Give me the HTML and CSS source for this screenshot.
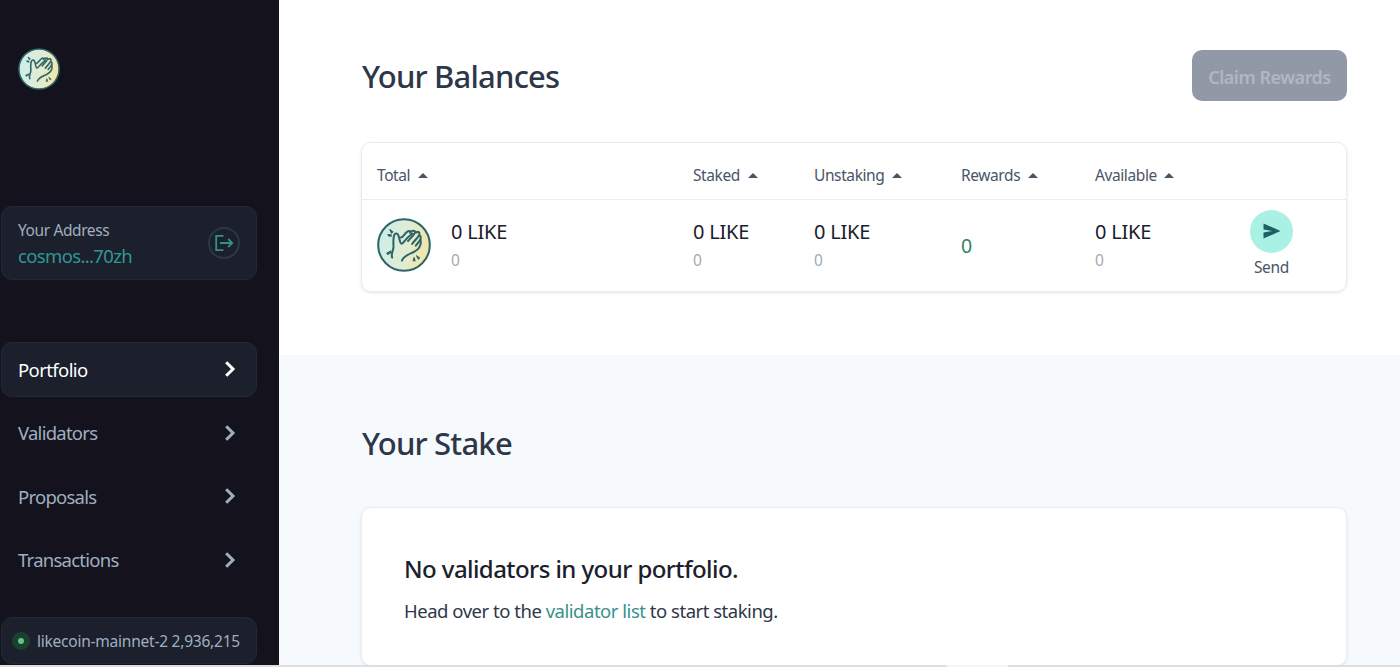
FILE: index.html
```
<!DOCTYPE html>
<html lang="en">
<head>
    <meta charset="UTF-8">
    <meta name="viewport" content="width=device-width, initial-scale=1.0">
    <link rel="stylesheet" href="styles.css">
    <title>Portfolio</title>
</head>
<body>

<svg class="sprite" width="0" height="0">
    <defs>
        <linearGradient id="coin" x1="0" y1="0.4" x2="1" y2="0.6">
            <stop offset="0" stop-color="#cdeee8"/>
            <stop offset="0.55" stop-color="#e2ecd2"/>
            <stop offset="1" stop-color="#f5e3a3"/>
        </linearGradient>
    </defs>
    <symbol id="clap" viewBox="0 0 160 160">
        <circle cx="80" cy="80" r="76.5" fill="url(#coin)" stroke="#2c646a" stroke-width="6"/>
        <g fill="none" stroke="#2c646a" stroke-width="6" stroke-linecap="round" stroke-linejoin="round">
            <path d="M45 117C40 106 49 98 49 84C48 70 48 59 51 51C54 43 62 45 64 53L69 72C71 78 75 77 80 70C87 61 96 53 105 46"/>
            <path d="M71 58C78 56 81 47 89 41C94 37 101 38 98 44"/>
            <path d="M100 41C107 36 115 37 112 44C109 51 101 58 92 68"/>
            <path d="M115 43C122 39 128 42 125 50C121 59 112 66 104 77"/>
            <path d="M126 52C132 54 130 63 125 69L115 82"/>
            <path d="M129 65C132 81 124 92 112 99C98 107 80 110 74 126"/>
        </g>
        <g fill="#2c646a" stroke="#2c646a" stroke-width="3" stroke-linejoin="round">
            <path d="M38 34L47 41L43 45Z"/>
            <path d="M32 49L42 50L42 54L35 53Z"/>
            <path d="M117 112L126 118L123 122Z"/>
            <path d="M110 117L113 127L107 127Z"/>
            <path d="M29 104L41 98L42 102L32 108Z"/>
        </g>
    </symbol>
    <symbol id="chevron" viewBox="0 0 12 18">
        <path d="M2.2 2.2L9 9L2.2 15.8" fill="none" stroke="currentColor" stroke-width="3"/>
    </symbol>
</svg>

<div class="app">
    <aside class="sidebar">
        <svg class="logo"><use href="#clap"/></svg>

        <div class="address-card">
            <div>
                <p class="address-label">Your Address</p>
                <p class="address">cosmos...70zh</p>
            </div>
            <button class="sign-out" aria-label="Sign out">
                <svg width="20" height="18" viewBox="0 0 20 18" fill="none" stroke="currentColor" stroke-width="1.8">
                    <path d="M9.5 1.9H2.2V16.1H9.5M6 9H18M14.2 5L18.2 9L14.2 13"/>
                </svg>
            </button>
        </div>

        <nav class="menu">
            <a class="menu-item active"><span>Portfolio</span><svg class="chevron"><use href="#chevron"/></svg></a>
            <a class="menu-item"><span>Validators</span><svg class="chevron"><use href="#chevron"/></svg></a>
            <a class="menu-item"><span>Proposals</span><svg class="chevron"><use href="#chevron"/></svg></a>
            <a class="menu-item"><span>Transactions</span><svg class="chevron"><use href="#chevron"/></svg></a>
        </nav>

        <div class="network">
            <span class="status-dot"></span>
            <span>likecoin-mainnet-2 2,936,215</span>
        </div>
    </aside>

    <main class="content">
        <section class="balances">
            <div class="section-header">
                <h1>Your Balances</h1>
                <button class="claim" disabled>Claim Rewards</button>
            </div>

            <div class="table">
                <div class="row head">
                    <span>Total <i class="sort"></i></span>
                    <span>Staked <i class="sort"></i></span>
                    <span>Unstaking <i class="sort"></i></span>
                    <span>Rewards <i class="sort"></i></span>
                    <span>Available <i class="sort"></i></span>
                </div>
                <div class="row data">
                    <div class="total">
                        <svg class="token"><use href="#clap"/></svg>
                        <div>
                            <p class="amount">0 LIKE</p>
                            <p class="fiat">0</p>
                        </div>
                    </div>
                    <div>
                        <p class="amount">0 LIKE</p>
                        <p class="fiat">0</p>
                    </div>
                    <div>
                        <p class="amount">0 LIKE</p>
                        <p class="fiat">0</p>
                    </div>
                    <p class="rewards">0</p>
                    <div>
                        <p class="amount">0 LIKE</p>
                        <p class="fiat">0</p>
                    </div>
                    <div class="send">
                        <span class="send-icon">
                            <svg width="18" height="16" viewBox="0 0 18 16">
                                <path d="M0.5 0.5L17.5 8L0.5 15.5V9.6L9 8L0.5 6.4Z" fill="#1f5f62"/>
                            </svg>
                        </span>
                        <span>Send</span>
                    </div>
                </div>
            </div>
        </section>

        <section class="stake">
            <h1>Your Stake</h1>
            <div class="empty-card">
                <h2>No validators in your portfolio.</h2>
                <p>Head over to the <a>validator list</a> to start staking.</p>
            </div>
        </section>
    </main>
</div>

<div class="bottom-bar"><span></span></div>

</body>
</html>
```
FILE: styles.css
```
* {
    box-sizing: border-box;
}

body {
    margin: 0;
    height: 667px;
    overflow: hidden;
    display: flex;
    flex-direction: column;
    background: #fff;
    color: #2d3748;
    font-family: "Noto Sans", "Open Sans", sans-serif;
}

h1, h2, p {
    margin: 0;
}

button {
    font-family: inherit;
    padding: 0;
}

.sprite {
    position: absolute;
}

.app {
    display: flex;
    height: 665px;
    overflow: hidden;
}

/* sidebar */
.sidebar {
    width: 279px;
    flex-shrink: 0;
    padding: 48px 22px 0 1px;
    background: #14131d;
    color: #a0aec0;
    display: flex;
    flex-direction: column;
}

.logo {
    width: 42px;
    height: 42px;
    margin-left: 17px;
    flex-shrink: 0;
}

.address-card {
    height: 74px;
    margin-top: 116px;
    padding: 0 16px;
    display: flex;
    align-items: center;
    justify-content: space-between;
    background: #1b202c;
    border: 1px solid #222836;
    border-radius: 11px;
    flex-shrink: 0;
}

.address-label {
    padding-top: 1px;
    font-size: 15.5px;
    line-height: 24px;
    letter-spacing: -0.4px;
}

.address {
    font-size: 18.5px;
    line-height: 28px;
    letter-spacing: -0.65px;
    color: #319795;
}

.sign-out {
    width: 32px;
    height: 32px;
    display: flex;
    align-items: center;
    justify-content: center;
    border: 2px solid #2d3748;
    border-radius: 50%;
    background: none;
    color: #319188;
}

.menu {
    margin-top: 62px;
    display: flex;
    flex-direction: column;
    gap: 8.5px;
}

.menu-item {
    height: 55px;
    padding: 0 20px 1px 16px;
    display: flex;
    align-items: center;
    justify-content: space-between;
    border: 1px solid transparent;
    border-radius: 11px;
    font-size: 18.5px;
    letter-spacing: -0.75px;
}

.menu-item.active {
    background: #1b202c;
    border-color: #222836;
    color: #fff;
    letter-spacing: -0.6px;
}

.chevron {
    width: 12px;
    height: 18px;
}

.network {
    height: 47px;
    margin-top: 29px;
    padding: 1px 10px 0;
    display: flex;
    align-items: center;
    gap: 7px;
    background: #1b202c;
    border: 1px solid #222836;
    border-radius: 11px;
    font-size: 15.5px;
    letter-spacing: -0.23px;
    white-space: nowrap;
}

.status-dot {
    width: 18px;
    height: 18px;
    border: 6px solid #1d3f2f;
    border-radius: 50%;
    background: #5cc787;
    flex-shrink: 0;
}

/* content */
.content {
    flex: 1;
    display: flex;
    flex-direction: column;
}

.balances {
    height: 355px;
    flex-shrink: 0;
    padding: 50px 53px 0 82px;
}

.section-header {
    display: flex;
    justify-content: space-between;
    align-items: center;
}

h1 {
    padding-left: 1px;
    font-size: 31px;
    line-height: 50px;
    font-weight: 500;
    letter-spacing: -0.8px;
}

.claim {
    width: 155px;
    height: 51px;
    padding-top: 2px;
    border: 0;
    border-radius: 10px;
    background: #9299a6;
    color: #b0b7c4;
    font-size: 18px;
    font-weight: 600;
    letter-spacing: -0.5px;
}

.table {
    height: 150px;
    margin-top: 41px;
    border: 1px solid #e9ecf0;
    border-radius: 10px;
    box-shadow: 0 1px 3px rgba(45, 55, 72, 0.12);
}

.row {
    display: grid;
    grid-template-columns: 316px 121px 147px 134px 155px 43px;
    padding-left: 15px;
}

.head {
    height: 57px;
    padding-top: 7px;
    align-items: center;
    border-bottom: 1px solid #e9ecf0;
    color: #4a5568;
    font-size: 15.5px;
    letter-spacing: -0.4px;
}

.sort {
    display: inline-block;
    margin-left: 4px;
    border: 5px solid transparent;
    border-top: 0;
    border-bottom-color: #4a5568;
    vertical-align: 3px;
}

.data {
    height: 90px;
    align-items: center;
}

.total {
    display: flex;
    align-items: center;
    gap: 20px;
}

.token {
    width: 54px;
    height: 54px;
}

.amount {
    color: #1a202c;
    font-size: 20px;
    line-height: 30px;
    letter-spacing: -0.2px;
}

.fiat {
    color: #a5a9b0;
    font-size: 15.5px;
    line-height: 26px;
}

.rewards {
    color: #2f7f69;
    font-size: 19.5px;
}

.send {
    display: flex;
    flex-direction: column;
    align-items: center;
    color: #4a5568;
    font-size: 15.5px;
    line-height: 28px;
    letter-spacing: -0.3px;
}

.send-icon {
    width: 43px;
    height: 43px;
    display: flex;
    align-items: center;
    justify-content: center;
    border-radius: 50%;
    background: #a8f1e4;
}

.stake {
    flex: 1;
    padding: 63px 53px 0 82px;
    background: #f6fafd;
}

.empty-card {
    height: 159px;
    margin-top: 39px;
    padding: 44px 42px;
    background: #fff;
    border: 1px solid #e9eef2;
    border-radius: 10px;
    box-shadow: 0 1px 3px rgba(45, 55, 72, 0.12);
}

h2 {
    color: #1a202c;
    font-size: 24px;
    line-height: 34px;
    font-weight: 500;
    letter-spacing: -0.57px;
}

.empty-card p {
    margin-top: 8px;
    font-size: 18.5px;
    line-height: 34px;
    letter-spacing: -0.48px;
}

.empty-card a {
    color: #38918a;
}

.bottom-bar {
    height: 2px;
    padding-left: 947px;
    background: #dedee0;
}

.bottom-bar span {
    display: block;
    width: 61px;
    height: 2px;
    background: #f6f6f6;
}
```
